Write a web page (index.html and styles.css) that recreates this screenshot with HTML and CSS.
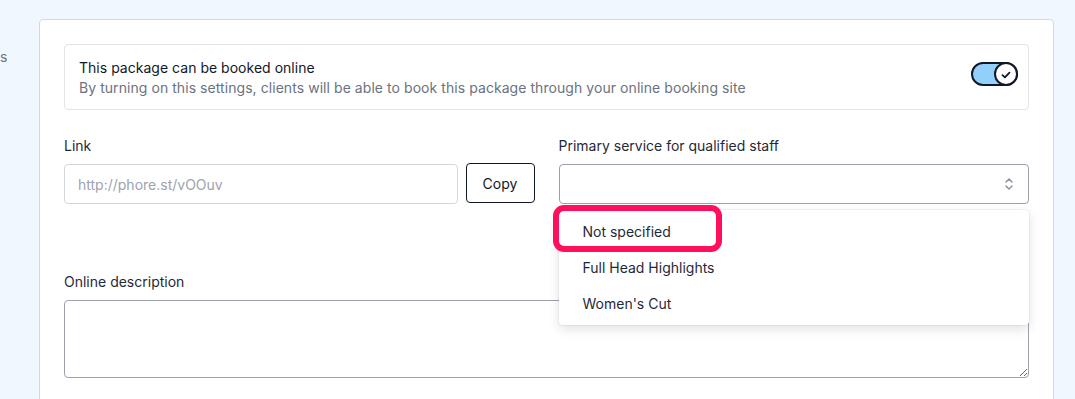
FILE: index.html
```html
<!DOCTYPE html>
<html>
<head>
<meta charset="utf-8">
<link rel="stylesheet" href="styles.css">
</head>
<body>
<div class="page">
  <aside class="sidebar"><span class="side-link">s</span></aside>
  <main class="card">
    <div class="online-box">
      <div class="online-text">
        <div class="online-title">This package can be booked online</div>
        <div class="online-sub">By turning on this settings, clients will be able to book this package through your online booking site</div>
      </div>
      <div class="toggle">
        <div class="knob">
          <svg width="10" height="8" viewBox="0 0 10 8"><path d="M1.5 4.2 L3.9 6.4 L8.5 1.6" fill="none" stroke="#111827" stroke-width="1.8" stroke-linecap="round" stroke-linejoin="round"/></svg>
        </div>
      </div>
    </div>

    <div class="fields">
      <div class="field">
        <label class="label">Link</label>
        <div class="link-row">
          <input class="input" type="text" placeholder="http://phore.st/vOOuv">
          <button class="btn">Copy</button>
        </div>
      </div>
      <div class="field select-field">
        <label class="label">Primary service for qualified staff</label>
        <div class="select">
          <svg class="chev" width="10" height="14" viewBox="0 0 10 14"><path d="M2 5 L5 2 L8 5 M2 9 L5 12 L8 9" fill="none" stroke="#8b93a1" stroke-width="1.5" stroke-linecap="round" stroke-linejoin="round"/></svg>
        </div>
        <ul class="menu">
          <li class="item">Not specified</li>
          <li class="item">Full Head Highlights</li>
          <li class="item">Women's Cut</li>
        </ul>
        <div class="highlight"></div>
      </div>
    </div>

    <div class="desc">
      <label class="label">Online description</label>
      <textarea class="textarea"></textarea>
    </div>
  </main>
</div>
</body>
</html>
```

FILE: styles.css
```css
* { box-sizing: border-box; }
html, body { margin: 0; padding: 0; }
body {
  background: #f0f7ff;
  font-family: Inter, "Noto Sans", sans-serif;
  font-size: 14px;
  line-height: 20px;
  color: #111827;
  height: 399px;
  overflow: hidden;
}
.page {
  display: flex;
  align-items: flex-start;
}
.sidebar {
  width: 39px;
  flex: 0 0 39px;
  padding-top: 47px;
}
.side-link {
  color: #6b7280;
  font-size: 14px;
  white-space: nowrap;
}
.card {
  margin-top: 19px;
  width: 1015px;
  background: #fff;
  border: 1px solid #c5daf6;
  border-radius: 4px;
  padding: 24px;
  height: 420px;
}
.online-box {
  display: flex;
  justify-content: space-between;
  align-items: flex-start;
  border: 1px solid #e3e4e8;
  border-radius: 4px;
  padding: 13px 10px 11px 14px;
  height: 66px;
}
.online-title { color: #111827; letter-spacing: 0.02px; }
.online-sub { color: #6b7280; letter-spacing: 0.06px; }
.toggle {
  margin-top: 4px;
  width: 47px;
  height: 24px;
  border: 2px solid #111827;
  border-radius: 12px;
  background: #93cffb;
  position: relative;
}
.knob {
  position: absolute;
  right: -2px;
  top: -2px;
  width: 24px;
  height: 24px;
  border: 2px solid #111827;
  border-radius: 50%;
  background: #fff;
  display: flex;
  align-items: center;
  justify-content: center;
}
.knob svg { margin-top: 1px; }
.fields {
  display: grid;
  grid-template-columns: 1fr 1fr;
  column-gap: 24px;
  margin-top: 26px;
}
.label {
  display: block;
  color: #1f2937;
  margin-bottom: 8px;
}
.link-row {
  display: flex;
  gap: 8px;
  align-items: flex-start;
}
.input {
  flex: 1;
  height: 40px;
  border: 1px solid #d4d6dc;
  border-radius: 4px;
  padding: 0 13px;
  font-family: inherit;
  font-size: 14px;
  color: #111827;
  outline: none;
}
.input::placeholder { color: #9ca3af; }
.btn {
  margin-top: -1px;
  width: 69px;
  height: 40px;
  background: #fff;
  border: 1.5px solid #111827;
  border-radius: 4px;
  font-family: inherit;
  font-size: 14px;
  color: #111827;
  padding: 0;
}
.select-field { position: relative; }
.select {
  height: 40px;
  border: 1px solid #9ca1ad;
  border-radius: 4px;
  display: flex;
  align-items: center;
  justify-content: flex-end;
  padding-right: 14px;
}
.menu {
  position: absolute;
  left: 0;
  right: 0;
  top: 74px;
  margin: 0;
  list-style: none;
  background: #fff;
  border-radius: 4px;
  padding: 4px 0 3px;
  box-shadow: 0 4px 12px rgba(0,0,0,0.12), 0 0 0 1px rgba(0,0,0,0.04);
  z-index: 2;
}
.item {
  height: 36px;
  line-height: 36px;
  padding-left: 24px;
  color: #1f2937;
}
.highlight {
  position: absolute;
  left: -6px;
  top: 69px;
  width: 169px;
  height: 47px;
  border: 6px solid #ff0f5c;
  border-radius: 11px;
  z-index: 3;
}
.desc {
  margin-top: 68px;
}
.textarea {
  display: block;
  width: 100%;
  height: 78px;
  border: 1px solid #9ca1ad;
  border-radius: 4px;
  font-family: inherit;
  font-size: 14px;
  resize: vertical;
  outline: none;
}
```
